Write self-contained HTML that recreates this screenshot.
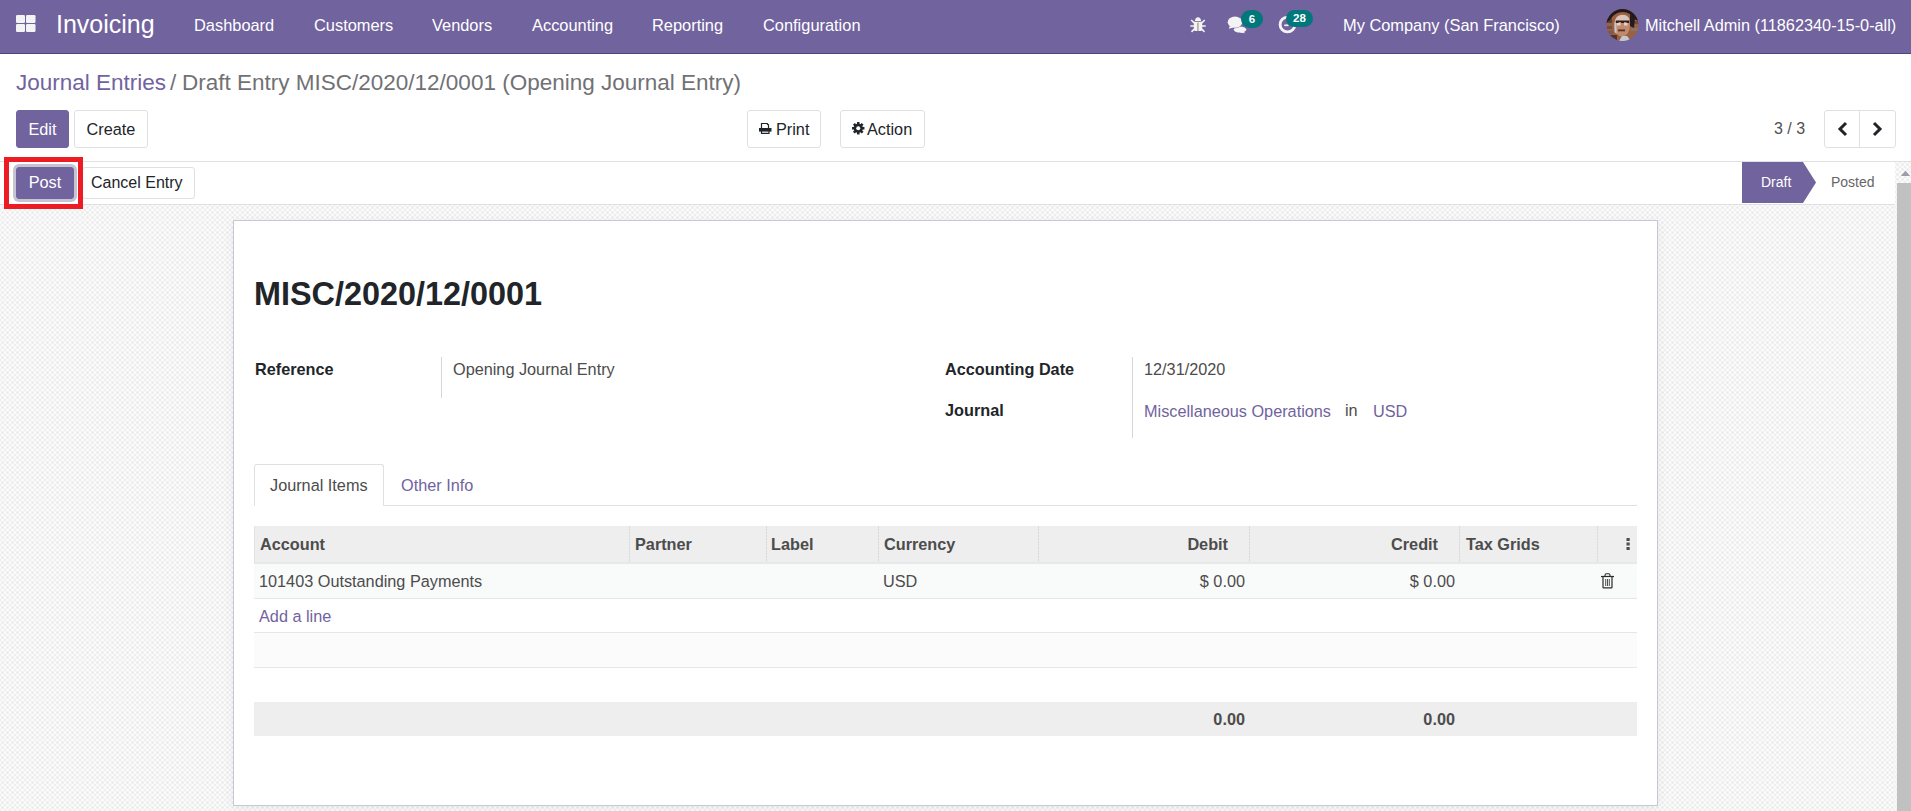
<!DOCTYPE html>
<html>
<head>
<meta charset="utf-8">
<style>
*{box-sizing:border-box;margin:0;padding:0}
html,body{width:1911px;height:811px;overflow:hidden;background:#fff}
body{font-family:"Liberation Sans",sans-serif;font-size:16.25px;color:#4c4c4c;position:relative}
.abs{position:absolute}
.nav{left:0;top:0;width:1911px;height:54px;background:#71639e;border-bottom:1px solid #4e4580;color:#fff}
.nav .t{position:absolute;white-space:nowrap;line-height:1;font-size:16.4px}
.cp{left:0;top:54px;width:1911px;height:107px;background:#fff}
.btn{position:absolute;height:38px;border:1px solid #dfe0e2;border-radius:3px;background:#fff;color:#212529;font-size:16.25px;line-height:37px;text-align:center;white-space:nowrap}
.btn.pr{background:#71639e;border-color:#71639e;color:#fff}
.sb{left:0;top:161px;width:1911px;height:44px;background:#fff;border-top:1px solid #dfe0e2}
.sbb{left:0;top:204px;width:1895px;height:1px;background:#dfe0e2}
.bg{left:0;top:205px;width:1895px;height:606px;background:radial-gradient(circle,#e9e9e9 0.6px,rgba(233,233,233,0) 1.9px) 0 0/5px 5px,radial-gradient(circle,#e9e9e9 0.6px,rgba(233,233,233,0) 1.9px) 2.5px 2.5px/5px 5px,#fdfdfd}
.sheet{left:233px;top:220px;width:1425px;height:586px;background:#fff;border:1px solid #c9c7d6;box-shadow:0 2px 10px rgba(0,0,0,.06)}
.scr{left:1895px;top:162px;width:16px;height:649px;background:radial-gradient(circle,#e9e9e9 0.6px,rgba(233,233,233,0) 1.9px) 0 0/5px 5px,radial-gradient(circle,#e9e9e9 0.6px,rgba(233,233,233,0) 1.9px) 2.5px 2.5px/5px 5px,#fdfdfd}
.thumb{left:1897px;top:183px;width:14px;height:628px;background:#c1c1c1}
.tx{position:absolute;white-space:nowrap;line-height:1}
.lbl{font-weight:bold;color:#212529}
.link{color:#71639e}
</style>
</head>
<body>
<!-- navbar -->
<div class="abs nav">
  <svg class="abs" style="left:16px;top:15px" width="20" height="17" viewBox="0 0 20 17">
    <rect x="0" y="0" width="9" height="8" rx="1.2" fill="#f3f3f3"/>
    <rect x="10" y="0" width="9.5" height="8" rx="1.2" fill="#f3f3f3"/>
    <rect x="0" y="9" width="9" height="8" rx="1.2" fill="#f3f3f3"/>
    <rect x="10" y="9" width="9.5" height="8" rx="1.2" fill="#f3f3f3"/>
  </svg>
  <div class="t" style="left:56px;top:12px;font-size:25px">Invoicing</div>
  <div class="t" style="left:194px;top:17px">Dashboard</div>
  <div class="t" style="left:314px;top:17px">Customers</div>
  <div class="t" style="left:432px;top:17px">Vendors</div>
  <div class="t" style="left:532px;top:17px">Accounting</div>
  <div class="t" style="left:652px;top:17px">Reporting</div>
  <div class="t" style="left:763px;top:17px">Configuration</div>
  <div class="t" style="left:1343px;top:17px">My Company (San Francisco)</div>
  <svg class="abs" style="left:1606px;top:9px" width="33" height="32" viewBox="0 0 33 32"><defs><clipPath id="av"><circle cx="16.5" cy="16" r="16"/></clipPath></defs><g clip-path="url(#av)">
<rect width="33" height="32" fill="#9a6041"/>
<rect x="0" y="9" width="6" height="5" fill="#5a4038"/><rect x="1" y="17" width="5" height="3" fill="#6a5048"/><rect x="0" y="22" width="7" height="3" fill="#7a5a4a"/><rect x="26" y="12" width="7" height="3" fill="#6b4e40"/><rect x="25" y="19" width="8" height="3" fill="#8a7464"/><rect x="2" y="26" width="9" height="6" fill="#4a3630"/>
<path d="M0 0H33V12L28 10C26 6 22 3 17 3C11 3 7 6 4 11L0 14Z" fill="#1f191d"/>
<path d="M24 5L29 9L28 19L24 17Z" fill="#231b1f"/>
<ellipse cx="16" cy="16.5" rx="8" ry="11" fill="#c08a6c"/>
<path d="M9 12C10 7.5 13 6 17 6C21 6 23 8 23.5 11L22 12H10Z" fill="#dcc4bc"/>
<path d="M8.5 13V23L10.5 25V14Z" fill="#c8c8d0"/>
<path d="M10 11.5H23V14H20.5V13H18V14H15V13H12.5V14H10Z" fill="#2e2220"/>
<rect x="11" y="14" width="3.5" height="2.5" fill="#e2d0cc"/><rect x="18" y="14" width="3.5" height="2.5" fill="#e2d0cc"/>
<rect x="12" y="20.5" width="7" height="1.8" fill="#5a3026"/>
<path d="M13 32L16 27H21L25 32Z" fill="#c4c8d0"/>
</g></svg>
  <div class="t" style="left:1645px;top:17px;font-size:16.3px">Mitchell Admin (11862340-15-0-all)</div>
</div>
<!-- control panel -->
<div class="abs cp"></div>
<div class="tx link" style="left:16px;top:72px;font-size:22.5px">Journal Entries</div>
<div class="tx" style="left:170px;top:72px;font-size:22.5px;color:#717175">/</div>
<div class="tx" style="left:182px;top:72px;font-size:22.5px;color:#717175">Draft Entry MISC/2020/12/0001 (Opening Journal Entry)</div>
<div class="btn pr" style="left:16px;top:110px;width:53px">Edit</div>
<div class="btn" style="left:74px;top:110px;width:74px">Create</div>
<div class="btn" style="left:747px;top:110px;width:74px;text-align:left;padding-left:28px">Print</div>
<div class="btn" style="left:840px;top:110px;width:85px;text-align:left;padding-left:26px">Action</div>
<div class="tx" style="left:1774px;top:121px;color:#505050;font-size:16px">3 / 3</div>
<div class="btn" style="left:1824px;top:110px;width:72px"></div>
<!-- status bar -->
<div class="abs sb"></div>
<div class="abs sbb"></div>
<div class="btn pr" style="left:16px;top:167px;width:58px;height:32px;line-height:29px;box-shadow:0 0 0 3px #c6c4d3">Post</div>
<div class="btn" style="left:82px;top:167px;width:113px;height:32px;line-height:29px;text-align:left;padding-left:8px;font-size:16px">Cancel Entry</div>
<!-- bg -->
<div class="abs bg"></div>
<div class="abs scr"></div>
<div class="abs thumb"></div>
<div class="abs sheet"></div>
<div class="tx lbl" style="left:254px;top:278px;font-size:32.4px">MISC/2020/12/0001</div>
<div class="tx lbl" style="left:255px;top:361px">Reference</div>
<div class="tx" style="left:453px;top:361px">Opening Journal Entry</div>
<div class="tx lbl" style="left:945px;top:361px">Accounting Date</div>
<div class="tx" style="left:1144px;top:361px">12/31/2020</div>
<div class="tx lbl" style="left:945px;top:402px">Journal</div>
<div class="tx link" style="left:1144px;top:403px">Miscellaneous Operations</div>
<div class="tx" style="left:1345px;top:402px">in</div>
<div class="tx link" style="left:1373px;top:403px">USD</div>

<!-- right col separators -->
<div class="abs" style="left:441px;top:357px;width:1px;height:41px;background:#d6d6d6"></div>
<div class="abs" style="left:1132px;top:357px;width:1px;height:81px;background:#d6d6d6"></div>
<!-- tabs -->
<div class="abs" style="left:254px;top:505px;width:1383px;height:1px;background:#dfe0e2"></div>
<div class="abs" style="left:254px;top:464px;width:130px;height:42px;background:#fff;border:1px solid #dfe0e2;border-bottom:none;border-radius:3px 3px 0 0"></div>
<div class="tx" style="left:270px;top:477px;color:#4c4c4c">Journal Items</div>
<div class="tx link" style="left:401px;top:477px">Other Info</div>
<!-- table -->
<div class="abs" style="left:254px;top:526px;width:1383px;height:38px;background:#eeeeee;border-left:1px solid #e2e2e2;border-bottom:2px solid #e7e8e9"></div>
<div class="abs" style="left:629px;top:526px;width:1px;height:36px;background:repeating-linear-gradient(#dadada 0 2px,#e6e6e6 2px 3px)"></div>
<div class="abs" style="left:766px;top:526px;width:1px;height:36px;background:repeating-linear-gradient(#dadada 0 2px,#e6e6e6 2px 3px)"></div>
<div class="abs" style="left:878px;top:526px;width:1px;height:36px;background:repeating-linear-gradient(#dadada 0 2px,#e6e6e6 2px 3px)"></div>
<div class="abs" style="left:1038px;top:526px;width:1px;height:36px;background:repeating-linear-gradient(#dadada 0 2px,#e6e6e6 2px 3px)"></div>
<div class="abs" style="left:1249px;top:526px;width:1px;height:36px;background:repeating-linear-gradient(#dadada 0 2px,#e6e6e6 2px 3px)"></div>
<div class="abs" style="left:1459px;top:526px;width:1px;height:36px;background:repeating-linear-gradient(#dadada 0 2px,#e6e6e6 2px 3px)"></div>
<div class="abs" style="left:1597px;top:526px;width:1px;height:36px;background:repeating-linear-gradient(#dadada 0 2px,#e6e6e6 2px 3px)"></div>
<div class="tx" style="left:260px;top:536px;font-weight:bold">Account</div>
<div class="tx" style="left:635px;top:536px;font-weight:bold">Partner</div>
<div class="tx" style="left:771px;top:536px;font-weight:bold">Label</div>
<div class="tx" style="left:884px;top:536px;font-weight:bold">Currency</div>
<div class="tx" style="left:1128px;top:536px;width:100px;text-align:right;font-weight:bold">Debit</div>
<div class="tx" style="left:1338px;top:536px;width:100px;text-align:right;font-weight:bold">Credit</div>
<div class="tx" style="left:1466px;top:536px;font-weight:bold">Tax Grids</div>
<svg class="abs" style="left:1626px;top:537px" width="5" height="14" viewBox="0 0 5 14"><rect x="0.5" y="1" width="3.2" height="3" fill="#4c4c4c"/><rect x="0.5" y="5.5" width="3.2" height="3" fill="#4c4c4c"/><rect x="0.5" y="10" width="3.2" height="3" fill="#4c4c4c"/></svg>
<div class="abs" style="left:254px;top:564px;width:1383px;height:35px;background:#f9fafa;border-bottom:1px solid #e6e6e6"></div>
<div class="tx" style="left:259px;top:573px">101403 Outstanding Payments</div>
<div class="tx" style="left:883px;top:573px">USD</div>
<div class="tx" style="left:1145px;top:573px;width:100px;text-align:right">$ 0.00</div>
<div class="tx" style="left:1355px;top:573px;width:100px;text-align:right">$ 0.00</div>
<div class="abs" style="left:254px;top:599px;width:1383px;height:34px;background:#fff;border-bottom:1px solid #e6e6e6"></div>
<div class="tx link" style="left:259px;top:608px">Add a line</div>
<div class="abs" style="left:254px;top:633px;width:1383px;height:35px;background:#fbfbfb;border-bottom:1px solid #e6e6e6"></div>
<div class="abs" style="left:254px;top:702px;width:1383px;height:34px;background:#eeeeee"></div>
<div class="tx" style="left:1145px;top:711px;width:100px;text-align:right;font-weight:bold">0.00</div>
<div class="tx" style="left:1355px;top:711px;width:100px;text-align:right;font-weight:bold">0.00</div>

<!-- statusbar right -->
<svg class="abs" style="left:1742px;top:162px" width="74" height="41" viewBox="0 0 74 41"><path d="M0 0H61L74 20.5L61 41H0Z" fill="#71639e"/></svg>
<div class="tx" style="left:1761px;top:175px;font-size:14px;color:#fff">Draft</div>
<div class="tx" style="left:1831px;top:175px;font-size:14px;color:#666">Posted</div>
<!-- scrollbar arrow -->
<svg class="abs" style="left:1900px;top:170px" width="11" height="7" viewBox="0 0 11 7"><path d="M0.8 6L5.5 0.8L10.2 6Z" fill="#9a9ea8"/></svg>
<!-- print icon -->
<svg class="abs" style="left:758px;top:122px" width="15" height="13" viewBox="0 0 15 13"><path d="M3.5 6.5V1.5H9L10.5 3V6.5" fill="none" stroke="#212529" stroke-width="1.2"/><path d="M9 1L11 3H9Z" fill="#212529"/><rect x="1" y="6" width="12.5" height="3.6" fill="#212529"/><path d="M3.5 9V11.4H11V9" fill="none" stroke="#212529" stroke-width="1.2"/></svg>
<!-- gear -->
<svg class="abs" style="left:852px;top:122px" width="12.5" height="12.5" viewBox="-6.25 -6.25 12.5 12.5"><g fill="#212529"><circle r="4.6"/><rect x="-1.3" y="-6.2" width="2.6" height="12.4" transform="rotate(0)"/><rect x="-1.3" y="-6.2" width="2.6" height="12.4" transform="rotate(45)"/><rect x="-1.3" y="-6.2" width="2.6" height="12.4" transform="rotate(90)"/><rect x="-1.3" y="-6.2" width="2.6" height="12.4" transform="rotate(135)"/></g><circle r="2" fill="#fff"/></svg>
<!-- pager chevrons -->
<div class="abs" style="left:1859px;top:111px;width:1px;height:36px;background:#dfe0e2"></div>
<svg class="abs" style="left:1837px;top:121px" width="11" height="16" viewBox="0 0 11 16"><path d="M9 2L3 8L9 14" stroke="#212529" stroke-width="3" fill="none"/></svg>
<svg class="abs" style="left:1872px;top:121px" width="11" height="16" viewBox="0 0 11 16"><path d="M2 2L8 8L2 14" stroke="#212529" stroke-width="3" fill="none"/></svg>
<!-- trash -->
<svg class="abs" style="left:1600px;top:573px" width="15" height="16" viewBox="0 0 15 16"><path d="M5 3.2V2.2C5 1.3 5.6 0.8 6.4 0.8H8.6C9.4 0.8 10 1.3 10 2.2V3.2" fill="none" stroke="#2a2a2a" stroke-width="1.1"/><rect x="1" y="2.9" width="13" height="1.2" fill="#2a2a2a"/><path d="M3 4V14.2C3 14.6 3.3 14.9 3.7 14.9H11.3C11.7 14.9 12 14.6 12 14.2V4" fill="none" stroke="#2a2a2a" stroke-width="1.2"/><path d="M5.7 6V13M7.5 6V13M9.3 6V13" stroke="#3a3a3a" stroke-width="0.9"/></svg>
<!-- systray icons -->
<svg class="abs" style="left:1190px;top:17px" width="16" height="16" viewBox="0 0 16 16"><g fill="#f3f3f3"><path d="M4.9 4C4.9 1.6 6.4 0.2 8 0.2C9.6 0.2 11.1 1.6 11.1 4Z"/><path d="M3.8 4.8H12.2V12.6C12.2 13.5 11.6 14 10.8 14H5.2C4.4 14 3.8 13.5 3.8 12.6Z"/></g><g stroke="#f3f3f3" stroke-width="1.6" fill="none"><path d="M1.2 3L4.2 5.8M14.8 3L11.8 5.8M0.3 9H4M15.7 9H12M1.5 14.8L4.2 12.2M14.5 14.8L11.8 12.2"/></g><rect x="7.4" y="5.6" width="1.1" height="8.4" fill="#a08a70"/></svg>
<svg class="abs" style="left:1227px;top:15px" width="22" height="19" viewBox="0 0 22 19"><g fill="#f3f3f3"><ellipse cx="13" cy="14.6" rx="6.3" ry="3"/><path d="M15.5 16L18.3 18.2L12.5 17.4Z"/></g><ellipse cx="8" cy="7.2" rx="7.7" ry="6" fill="#71639e"/><path d="M2.3 11L0.9 14.6L7 12.6Z" fill="#71639e"/><g fill="#f3f3f3"><ellipse cx="8" cy="7.2" rx="7.3" ry="5.6"/><path d="M2.8 11L1.8 13.8L6.5 12.4Z"/></g></svg>
<div class="abs" style="left:1241px;top:10px;width:22px;height:18px;border-radius:9px;background:#00777a;color:#fff;font-weight:bold;font-size:11.5px;line-height:18px;text-align:center">6</div>
<svg class="abs" style="left:1277.5px;top:14.5px" width="19" height="19" viewBox="0 0 19 19"><circle cx="9.5" cy="9.5" r="7.4" fill="none" stroke="#f3f3f3" stroke-width="2.9"/><path d="M6.3 10.3H10.5" stroke="#f3f3f3" stroke-width="1.7"/></svg>
<div class="abs" style="left:1286px;top:10px;width:27px;height:17px;border-radius:9px;background:#00777a;color:#fff;font-weight:bold;font-size:11.5px;line-height:17px;text-align:center">28</div>
<div class="abs" style="left:4px;top:157px;width:79px;height:52px;border:5px solid #ed1c24"></div>
</body>
</html>
